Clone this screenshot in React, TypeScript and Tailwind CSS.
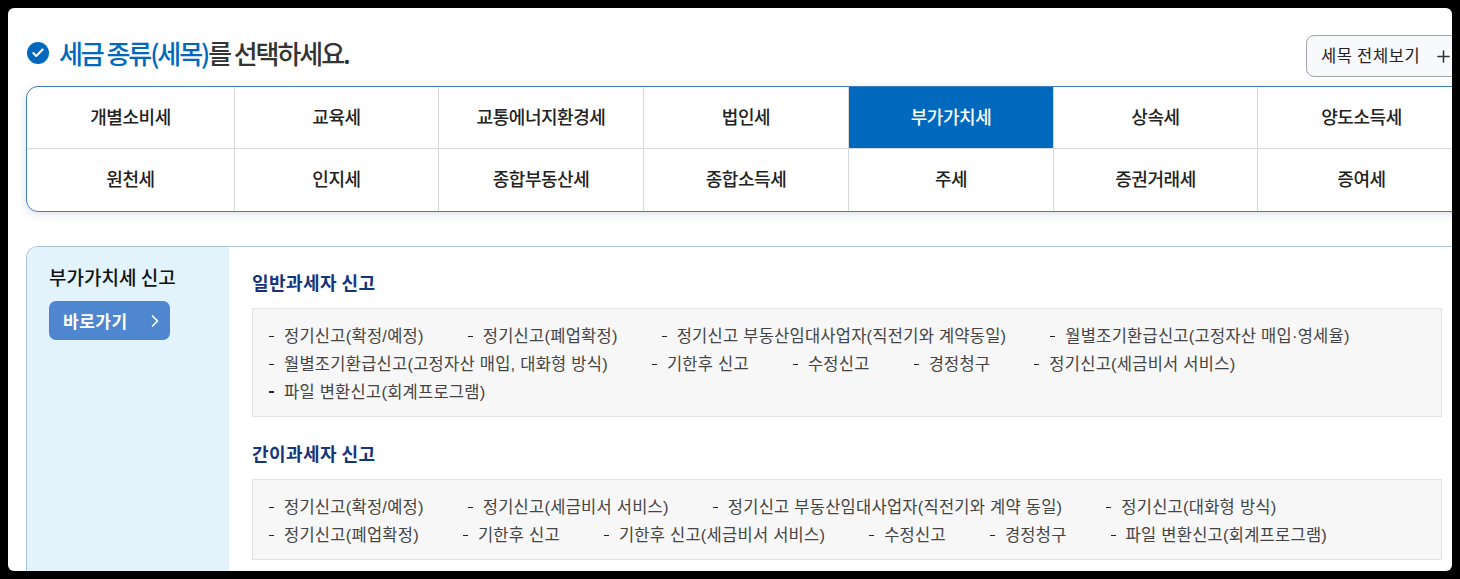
import { Check, ChevronRight, Plus } from 'lucide-react';

const taxes = [
  ['개별소비세', '교육세', '교통에너지환경세', '법인세', '부가가치세', '상속세', '양도소득세'],
  ['원천세', '인지세', '종합부동산세', '종합소득세', '주세', '증권거래세', '증여세'],
];

const sections = [
  {
    title: '일반과세자 신고',
    rows: [
      ['정기신고(확정/예정)', '정기신고(폐업확정)', '정기신고 부동산임대사업자(직전기와 계약동일)', '월별조기환급신고(고정자산 매입·영세율)'],
      ['월별조기환급신고(고정자산 매입, 대화형 방식)', '기한후 신고', '수정신고', '경정청구', '정기신고(세금비서 서비스)'],
      ['파일 변환신고(회계프로그램)'],
    ],
  },
  {
    title: '간이과세자 신고',
    rows: [
      ['정기신고(확정/예정)', '정기신고(세금비서 서비스)', '정기신고 부동산임대사업자(직전기와 계약 동일)', '정기신고(대화형 방식)'],
      ['정기신고(폐업확정)', '기한후 신고', '기한후 신고(세금비서 서비스)', '수정신고', '경정청구', '파일 변환신고(회계프로그램)'],
    ],
  },
];

function TaxTable() {
  return (
    <div className="mt-[9px] w-[1440px] rounded-l-[12px] border border-[#3f7fbd] shadow-[0_2px_10px_rgba(60,90,120,0.18)] overflow-hidden bg-white">
      {taxes.map((row, i) => (
        <div
          key={i}
          className={`grid h-[62px] grid-cols-[208px_204px_205px_205px_205px_204px_1fr] ${i === 0 ? 'border-b border-[#d8d8d8]' : ''}`}
        >
          {row.map((name, j) => (
            <div
              key={name}
              className={`flex items-center justify-center pb-[3px] text-[18px] font-medium tracking-[-0.025em] ${name === '부가가치세' ? 'bg-[#0069bd] text-white' : 'text-[#222222]'} ${j < 6 ? 'border-r border-[#d8d8d8]' : ''}`}
            >
              {name}
            </div>
          ))}
        </div>
      ))}
    </div>
  );
}

function Section({ title, rows, className }: { title: string; rows: string[][]; className: string }) {
  return (
    <div className={className}>
      <h3 className="text-[18px] leading-[24px] font-bold tracking-[0.025em] text-[#14357c]">{title}</h3>
      <div className="mt-[14px] w-[1190px] border border-[#e3e3e3] bg-[#f7f7f7] px-[16px] pt-[13px] pb-[10px]">
        {rows.map((items, i) => (
          <div key={i} className="flex h-[28px] items-center gap-[44px]">
            {items.map((item, j) => (
              <span key={j} className="flex items-center gap-[10px] font-['Liberation_Sans','Noto_Sans_CJK_KR',sans-serif] text-[16.5px] tracking-[0.015em] text-[#444444]">
                <span className={`w-[5px] bg-[#222222] ${i === 2 ? 'h-[2px]' : 'h-px'}`} />
                {item}
              </span>
            ))}
          </div>
        ))}
      </div>
    </div>
  );
}

export default function App() {
  return (
    <div className="h-[579px] w-[1460px] overflow-hidden bg-black p-[8px] font-['Noto_Sans_CJK_KR','Noto_Sans',sans-serif]">
      <div className="h-[563px] w-[1444px] overflow-hidden rounded-[6px] bg-white pl-[18px]">
        <div className="flex h-[69px] items-end justify-between">
          <div className="flex items-center gap-[11px] pb-[6px]">
            <span className="ml-[1px] flex h-[22px] w-[22px] items-center justify-center rounded-full bg-[#0069bd]">
              <Check size={14} strokeWidth={3.5} className="text-white" />
            </span>
            <h2 className="-ml-[1px] text-[26px] leading-[36px] font-medium tracking-[-0.08em] text-[#333333]">
              <span className="text-[#0069bd]">세금 종류(세목)</span>를 선택하세요.
            </h2>
          </div>
          <button className="flex h-[42px] w-[170px] shrink-0 -mr-[24px] items-center rounded-[8px] border border-[#a5a5a5] bg-[#f7f9fc] pl-[14px] pb-[2px] text-[16.5px] tracking-[0.04em] text-[#222222]">
            세목 전체보기
            <Plus size={19} strokeWidth={2} className="ml-[14px] mt-[2px] shrink-0 text-[#333333]" />
          </button>
        </div>
        <TaxTable />
        <div className="mt-[34px] flex h-[340px] w-[1440px] rounded-tl-[12px] border-t border-l border-[#a9c2d6] overflow-hidden">
          <aside className="w-[202px] shrink-0 bg-[#e3f3fb] pl-[22px] pt-[17px]">
            <h3 className="text-[19px] leading-[26px] font-medium tracking-[0em] text-[#111111]">부가가치세 신고</h3>
            <button className="mt-[11px] flex h-[39px] w-[121px] items-center justify-between rounded-[7px] bg-[#4e87cf] pl-[14px] pr-[5px] text-[17px] font-bold tracking-[0.03em] text-white">
              바로가기
              <ChevronRight size={20} strokeWidth={2} />
            </button>
          </aside>
          <div className="pl-[23px] pt-[23px]">
            <Section title={sections[0].title} rows={sections[0].rows} className="" />
            <Section title={sections[1].title} rows={sections[1].rows} className="mt-[24px]" />
          </div>
        </div>
      </div>
    </div>
  );
}
